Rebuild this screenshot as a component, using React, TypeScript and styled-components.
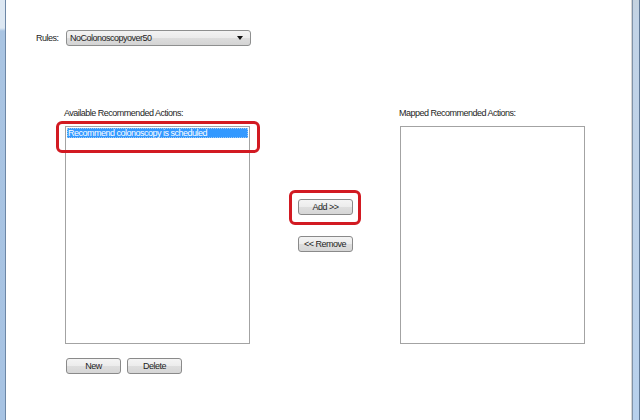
import React, { useState } from "react";
import styled, { createGlobalStyle } from "styled-components";

const GlobalStyle = createGlobalStyle`
  html, body {
    margin: 0;
    padding: 0;
    background: #ffffff;
  }
  #root {
    width: 640px;
    height: 420px;
    overflow: hidden;
  }
`;

const Window = styled.div`
  display: flex;
  width: 640px;
  height: 420px;
  font-family: "Liberation Sans", Arial, sans-serif;
  font-size: 9px;
  letter-spacing: -0.5px;
  color: #242424;
`;

const LeftFrame = styled.div`
  width: 5px;
  border-right: 1px solid #6d87a6;
  background: linear-gradient(#dde8f3 0, #dde8f3 28px, #a9c4e2 31px, #a7c3e3 100%);
`;

const RightFrame = styled.div`
  width: 7px;
  padding-left: 1px;
  border-left: 1px solid #d6d6d6;
  box-shadow: inset 1px 0 0 #7f92a8, inset -1px 0 0 #5f7896;
  background: linear-gradient(#c5d2de 0, #c2d3e6 20px, #b7d0ec 100%);
`;

const Content = styled.div`
  flex: 1;
  display: flex;
  flex-direction: column;
  padding-top: 30px;
  background: #ffffff;
`;

const RulesRow = styled.div`
  display: flex;
  align-items: center;
  padding-left: 30px;
  height: 16px;
`;

const Label = styled.span`
  display: block;
  white-space: nowrap;
  line-height: 14px;
`;

const RulesLabel = styled(Label)`
  width: 30px;
`;

const Combo = styled.div`
  display: flex;
  align-items: center;
  box-sizing: border-box;
  width: 185px;
  height: 16px;
  padding-left: 3px;
  border: 1px solid #8e8f8f;
  border-radius: 3px;
  background: linear-gradient(#f3f3f3, #ebebeb 50%, #dddddd 51%, #d4d4d4);
  color: #1e1e1e;
`;

const ComboArrow = styled.span`
  margin-left: auto;
  margin-right: 7px;
  width: 0;
  height: 0;
  border-left: 3px solid transparent;
  border-right: 3px solid transparent;
  border-top: 4px solid #111111;
`;

const Lists = styled.div`
  display: grid;
  grid-template-columns: 185px 150px 185px;
  margin-top: 60px;
  padding-left: 59px;
`;

const Column = styled.div<{ $top?: number }>`
  position: relative;
  display: flex;
  flex-direction: column;
  align-items: ${(p) => (p.$top ? "center" : "stretch")};
  padding-top: ${(p) => p.$top || 0}px;
`;

const ListLabel = styled(Label)<{ $shift?: number }>`
  margin-left: ${(p) => p.$shift || 0}px;
  margin-bottom: 6px;
`;

const ListBox = styled.div`
  box-sizing: border-box;
  height: 218px;
  padding: 1px;
  border: 1px solid #a3a3a3;
  background: #ffffff;
`;

const ListItem = styled.div<{ $selected?: boolean }>`
  height: 10px;
  line-height: 10px;
  padding-left: 1px;
  white-space: nowrap;
  background: ${(p) => (p.$selected ? "#3399ff" : "transparent")};
  color: ${(p) => (p.$selected ? "#ffffff" : "#262626")};
  outline: ${(p) => (p.$selected ? "1px dotted #9cc8f5" : "none")};
  outline-offset: -1px;
  cursor: default;
`;

const Callout = styled.div`
  position: absolute;
  left: -9px;
  top: 15px;
  width: 204px;
  height: 32px;
  box-sizing: border-box;
  border: 3px solid #d21a22;
  border-radius: 6px;
  pointer-events: none;
`;

const Ring = styled.div`
  box-sizing: border-box;
  padding: 6px 5px 7px 6px;
  border: 3px solid #d21a22;
  border-radius: 6px;
`;

const Button = styled.button<{ $w?: number }>`
  box-sizing: border-box;
  width: ${(p) => p.$w || 55}px;
  height: 16px;
  padding: 0;
  border: 1px solid #8a8a8a;
  border-radius: 3px;
  background: linear-gradient(#f4f4f4, #ececec 50%, #dedede 51%, #d6d6d6);
  font-family: inherit;
  font-size: 9px;
  letter-spacing: -0.5px;
  color: #1e1e1e;
  line-height: 14px;
  white-space: nowrap;
`;

const MiddleButtons = styled.div`
  display: flex;
  flex-direction: column;
  align-items: center;
  gap: 11px;
`;

const ButtonRow = styled.div`
  display: flex;
  gap: 6px;
  margin-top: 14px;
  padding-left: 1px;
`;

export default function App() {
  const [selected, setSelected] = useState(0);
  const available = ["Recommend colonoscopy is scheduled"];

  return (
    <>
      <GlobalStyle />
      <Window>
        <LeftFrame />
        <Content>
          <RulesRow>
            <RulesLabel>Rules:</RulesLabel>
            <Combo>
              NoColonoscopyover50
              <ComboArrow />
            </Combo>
          </RulesRow>
          <Lists>
            <Column>
              <ListLabel $shift={-1}>Available Recommended Actions:</ListLabel>
              <ListBox>
                {available.map((a, i) => (
                  <ListItem key={a} $selected={i === selected} onClick={() => setSelected(i)}>
                    {a}
                  </ListItem>
                ))}
              </ListBox>
              <Callout />
              <ButtonRow>
                <Button $w={55}>New</Button>
                <Button $w={55}>Delete</Button>
              </ButtonRow>
            </Column>
            <Column $top={84}>
              <MiddleButtons>
                <Ring>
                  <Button $w={55}>Add &gt;&gt;</Button>
                </Ring>
                <Button $w={55}>&lt;&lt; Remove</Button>
              </MiddleButtons>
            </Column>
            <Column>
              <ListLabel $shift={-1}>Mapped Recommended Actions:</ListLabel>
              <ListBox />
            </Column>
          </Lists>
        </Content>
        <RightFrame />
      </Window>
    </>
  );
}
